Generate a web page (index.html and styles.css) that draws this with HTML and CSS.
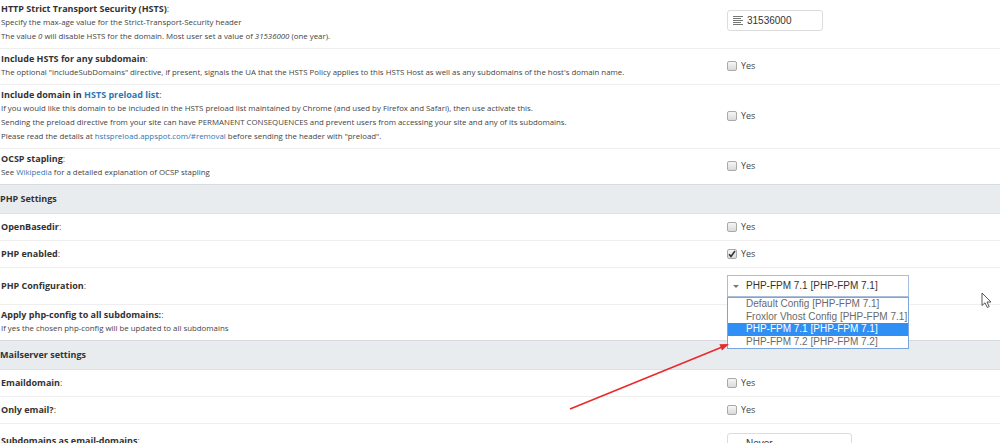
FILE: index.html
```html
<!DOCTYPE html>
<html>
<head>
<meta charset="utf-8">
<link rel="stylesheet" href="styles.css">
</head>
<body>
<div class="form">
  <div class="row multi">
    <div class="label">
      <div class="title"><b>HTTP Strict Transport Security (HSTS)</b>:</div>
      <div class="desc">Specify the max-age value for the Strict-Transport-Security header</div>
      <div class="desc">The value <i>0</i> will disable HSTS for the domain. Most user set a value of <i>31536000</i> (one year).</div>
    </div>
    <div class="value top">
      <div class="textinput">
        <svg class="lines" width="10" height="9" viewBox="0 0 10 9"><g fill="#777"><rect x="0" y="0" width="10" height="1"/><rect x="0" y="2" width="8" height="1"/><rect x="0" y="4" width="10" height="1"/><rect x="0" y="6" width="8" height="1"/><rect x="0" y="8" width="10" height="1"/></g></svg>
        <span>31536000</span>
      </div>
    </div>
  </div>
  <div class="row multi">
    <div class="label">
      <div class="title"><b>Include HSTS for any subdomain</b>:</div>
      <div class="desc">The optional "includeSubDomains" directive, if present, signals the UA that the HSTS Policy applies to this HSTS Host as well as any subdomains of the host's domain name.</div>
    </div>
    <div class="value"><span class="cb"></span><span class="yes">Yes</span></div>
  </div>
  <div class="row multi">
    <div class="label">
      <div class="title"><b>Include domain in <a class="tlink">HSTS preload list</a></b>:</div>
      <div class="desc">If you would like this domain to be included in the HSTS preload list maintained by Chrome (and used by Firefox and Safari), then use activate this.</div>
      <div class="desc">Sending the preload directive from your site can have PERMANENT CONSEQUENCES and prevent users from accessing your site and any of its subdomains.</div>
      <div class="desc">Please read the details at <a class="link">hstspreload.appspot.com/#removal</a> before sending the header with "preload".</div>
    </div>
    <div class="value"><span class="cb"></span><span class="yes">Yes</span></div>
  </div>
  <div class="row multi">
    <div class="label">
      <div class="title"><b>OCSP stapling</b>:</div>
      <div class="desc">See <a class="link">Wikipedia</a> for a detailed explanation of OCSP stapling</div>
    </div>
    <div class="value"><span class="cb"></span><span class="yes">Yes</span></div>
  </div>

  <div class="section">PHP Settings</div>

  <div class="row single">
    <div class="label"><div class="title"><b>OpenBasedir</b>:</div></div>
    <div class="value"><span class="cb"></span><span class="yes">Yes</span></div>
  </div>
  <div class="row single">
    <div class="label"><div class="title"><b>PHP enabled</b>:</div></div>
    <div class="value"><span class="cb checked"><svg width="8" height="8" viewBox="0 0 8 8"><path d="M1 4.2 L3 6.4 L7 1" fill="none" stroke="#333" stroke-width="1.6"/></svg></span><span class="yes">Yes</span></div>
  </div>
  <div class="row single">
    <div class="label"><div class="title"><b>PHP Configuration</b>:</div></div>
    <div class="value">
      <div class="select open">
        <span class="caret"></span><span>PHP-FPM 7.1 [PHP-FPM 7.1]</span>
        <div class="options">
          <div class="opt">Default Config [PHP-FPM 7.1]</div>
          <div class="opt">Froxlor Vhost Config [PHP-FPM 7.1]</div>
          <div class="opt sel">PHP-FPM 7.1 [PHP-FPM 7.1]</div>
          <div class="opt">PHP-FPM 7.2 [PHP-FPM 7.2]</div>
        </div>
      </div>
    </div>
  </div>
  <div class="row multi">
    <div class="label">
      <div class="title"><b>Apply php-config to all subdomains:</b>:</div>
      <div class="desc">If yes the chosen php-config will be updated to all subdomains</div>
    </div>
    <div class="value"></div>
  </div>

  <div class="section">Mailserver settings</div>

  <div class="row single">
    <div class="label"><div class="title"><b>Emaildomain</b>:</div></div>
    <div class="value"><span class="cb"></span><span class="yes">Yes</span></div>
  </div>
  <div class="row single">
    <div class="label"><div class="title"><b>Only email?</b>:</div></div>
    <div class="value"><span class="cb"></span><span class="yes">Yes</span></div>
  </div>
  <div class="row last">
    <div class="label top"><div class="title"><b>Subdomains as email-domains</b>:</div></div>
    <div class="value top">
      <div class="select never"><span class="caret"></span><span>Never</span></div>
    </div>
  </div>
</div>

<svg class="arrow" width="1000" height="443" viewBox="0 0 1000 443">
  <line x1="570" y1="409" x2="721" y2="347.4" stroke="#e82a2a" stroke-width="1.6"/>
  <polygon points="729,344 722,350.6 719.4,344.2" fill="#e82a2a"/>
</svg>

<svg class="cursor" width="12" height="17" viewBox="0 0 12 17">
  <path d="M1 1 L1 13.5 L4 10.8 L6.3 15.5 L8.2 14.6 L6 10 L10 10 Z" fill="#fff" stroke="#444" stroke-width="0.9" stroke-linejoin="round"/>
</svg>
</body>
</html>
```
FILE: styles.css
```css
html, body {
  margin: 0;
  padding: 0;
  background: #fff;
}
body {
  width: 1000px;
  height: 443px;
  overflow: hidden;
  position: relative;
  font-family: "Open Sans", "DejaVu Sans", sans-serif;
  color: #333;
}
.form {
  margin-top: -1px;
}
.row {
  display: grid;
  grid-template-columns: 727px 1fr;
  border-bottom: 1px solid #efefef;
}
.row.multi {
  padding: 4px 0 5px;
}
.row.single {
  padding: 7px 0;
}
.row.last {
  padding: 9px 0 0;
  border-bottom: none;
}
.label {
  padding-left: 1px;
  align-self: center;
}
.label.top {
  align-self: start;
  margin-top: 2px;
}
.title {
  font-size: 9px;
  line-height: 12px;
  color: #555;
  white-space: nowrap;
}
.title b {
  font-weight: 700;
  color: #333;
}
.tlink {
  color: #2a78b4;
}
.desc {
  font-size: 7.85px;
  line-height: 14px;
  color: #444;
  white-space: nowrap;
}
.link {
  color: #2a78b4;
}
.value {
  display: flex;
  align-items: center;
  align-self: center;
  line-height: 12px;
}
.value.top {
  align-self: start;
}
.row.multi .value.top {
  margin-top: 7px;
}
.cb {
  width: 10px;
  height: 10px;
  box-sizing: border-box;
  border: 1px solid #a9a9a9;
  border-radius: 2px;
  background: linear-gradient(#f6f6f6, #dadada);
  display: inline-flex;
  align-items: center;
  justify-content: center;
}
.yes {
  margin-left: 4px;
  font-size: 9px;
  color: #444;
}
.textinput {
  width: 96px;
  height: 21px;
  box-sizing: border-box;
  border: 1px solid #dcdcdc;
  border-radius: 3px;
  display: flex;
  align-items: center;
  padding-left: 5px;
  font-family: "Liberation Sans", Arial, sans-serif;
  font-size: 10px;
  color: #333;
}
.textinput .lines {
  margin-right: 4px;
}
.select {
  position: relative;
  width: 182px;
  height: 22px;
  box-sizing: border-box;
  border: 1px solid #a8bedb;
  display: flex;
  align-items: center;
  padding-left: 5px;
  font-family: "Liberation Sans", Arial, sans-serif;
  font-size: 10px;
  color: #333;
}
.caret {
  width: 0;
  height: 0;
  border-left: 3px solid transparent;
  border-right: 3px solid transparent;
  border-top: 3px solid #777;
  margin-right: 7px;
  margin-top: 1px;
}
.options {
  position: absolute;
  left: -1px;
  top: 21px;
  width: 182px;
  box-sizing: border-box;
  border: 1px solid #7aa4dc;
  background: #fff;
}
.opt {
  height: 12.5px;
  line-height: 12.5px;
  padding-left: 18px;
  color: #6a6a6a;
  white-space: nowrap;
}
.opt.sel {
  background: #2f8ff5;
  color: #fff;
}
.select.never {
  width: 125px;
  height: 24px;
  border: 1px solid #dcdcdc;
  border-radius: 3px;
  align-items: flex-start;
  padding-top: 4px;
}
.select.never .caret {
  margin-top: 6px;
}
.section {
  margin-top: -1px;
  height: 28px;
  line-height: 28px;
  background: #e9ecef;
  border-top: 1px solid #d7dbdf;
  border-bottom: 1px solid #dfe2e5;
  font-size: 9px;
  font-weight: 700;
  color: #333;
}
.arrow {
  position: absolute;
  left: 0;
  top: 0;
  pointer-events: none;
}
.cursor {
  position: absolute;
  left: 981px;
  top: 292px;
}
```
